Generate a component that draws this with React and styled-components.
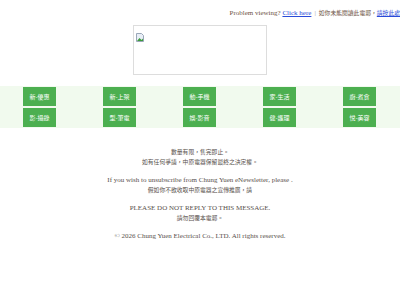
import React from "react";
import styled, { createGlobalStyle } from "styled-components";

const Global = createGlobalStyle`
  html, body { margin: 0; padding: 0; background: #fff; }
  body { font-family: "Liberation Serif", "Noto Sans CJK TC", serif; }
`;

const Page = styled.div`
  width: 400px;
  display: flex;
  flex-direction: column;
  align-items: stretch;
`;

const TopBar = styled.div`
  display: flex;
  justify-content: flex-end;
  align-items: baseline;
  white-space: nowrap;
  overflow: hidden;
  padding-top: 8px;
  height: 10px;
  font-size: 7px;
  line-height: 10px;
  color: #6e5344;
`;

const Link = styled.a`
  color: #2a4bd8;
  text-decoration: underline;
`;

const Sep = styled.span`
  color: #999;
  margin: 0 3px;
`;

const Cjk = styled.span`
  font-family: "Noto Sans CJK TC", sans-serif;
  font-size: 5.8px;
  line-height: 9.3px;
`;

const Banner = styled.div`
  margin: 7px auto 0;
  width: 134px;
  height: 50px;
  border: 1px solid #ddd;
  padding: 2px;
  box-sizing: border-box;
`;

const Band = styled.div`
  margin-top: 11px;
  background: #f1faee;
  padding: 1px 0;
  display: grid;
  grid-template-columns: repeat(5, 80px);
  row-gap: 2px;
`;

const Btn = styled.div`
  justify-self: center;
  width: 33px;
  height: 19px;
  background: #4caf50;
  color: #fff;
  font-family: "Noto Sans CJK TC", sans-serif;
  font-size: 6px;
  display: flex;
  align-items: center;
  justify-content: center;
  margin-left: -1px;
`;

const Footer = styled.div`
  margin-top: 19px;
  display: flex;
  flex-direction: column;
  align-items: center;
  gap: 8.4px;
  font-size: 7px;
  color: #58504c;
  text-align: center;
`;

const Para = styled.div`
  line-height: 9.3px;
`;

const rows = [
  ["新-優惠", "新-上架", "動-手機", "家-生活", "廚-煮食"],
  ["影-攝錄", "型-筆電", "娛-影音", "健-護理", "悅-美容"],
];

export default function App() {
  return (
    <Page>
      <Global />
      <TopBar>
        Problem viewing?&nbsp;<Link href="#">Click here</Link>
        <Sep>|</Sep>
        <Cjk>如你未能閱讀此電郵，</Cjk>
        <Link href="#">
          <Cjk>請按此處</Cjk>
        </Link>
      </TopBar>
      <Banner>
        <svg width="8" height="9" viewBox="0 0 8 9">
          <path d="M0.5 0.5h5l2 2v6h-7z" fill="#e8eef6" stroke="#9aa7b8" />
          <path d="M1 8l2.5-3 2 2 1.5-1.5V8z" fill="#3c9a3c" />
        </svg>
      </Banner>
      <Band>
        {rows.flat().map((t) => (
          <Btn key={t}>{t}</Btn>
        ))}
      </Band>
      <Footer>
        <Para>
          <Cjk>數量有限，售完即止。</Cjk>
          <br />
          <Cjk>如有任何爭議，中原電器保留最終之決定權。</Cjk>
        </Para>
        <Para>
          If you wish to unsubscribe from Chung Yuen eNewsletter, please .
          <br />
          <Cjk>假如你不欲收取中原電器之宣傳推廣，請</Cjk>
        </Para>
        <Para>
          PLEASE DO NOT REPLY TO THIS MESSAGE.
          <br />
          <Cjk>請勿回覆本電郵。</Cjk>
        </Para>
        <Para>© 2026 Chung Yuen Electrical Co., LTD. All rights reserved.</Para>
      </Footer>
    </Page>
  );
}
